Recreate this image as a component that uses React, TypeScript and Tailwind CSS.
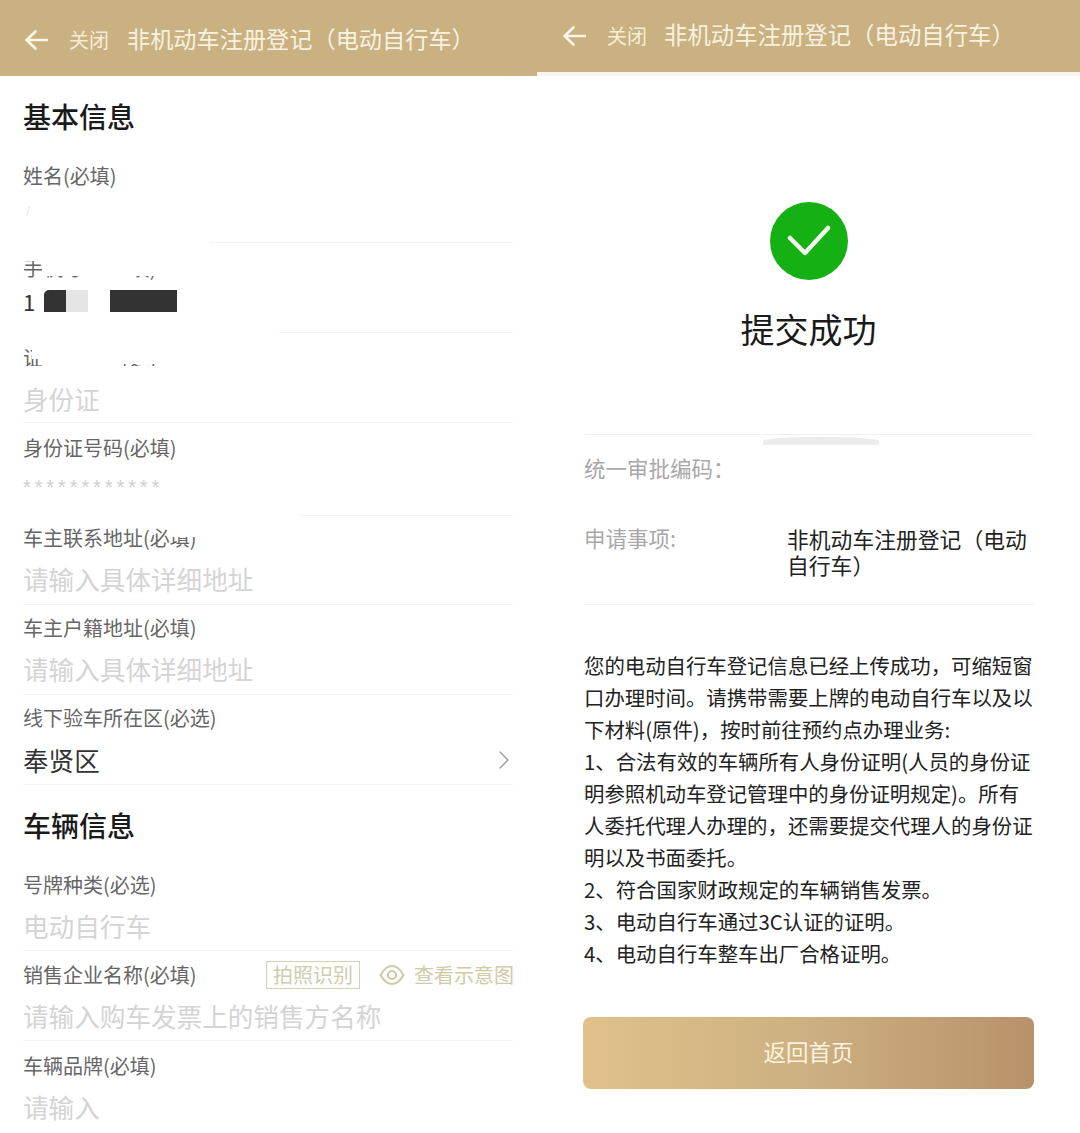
import type { ReactNode } from "react";

type FieldProps = {
	label: string;
	labelCover?: ReactNode;
	labelRight?: ReactNode;
	children?: ReactNode;
	// per row spacing, the rows in the picture are not quite even
	spacing: string;
	gap: string;
	bottom: string;
	dividerClass?: string;
};

const Field = ({
	label,
	labelCover,
	labelRight,
	children,
	spacing,
	gap,
	bottom,
	dividerClass = "",
}: FieldProps) => (
	<div className={spacing}>
		<div className="flex justify-between items-center h-[28px]">
			<div className="relative text-[20px] leading-[28px] text-[#666666]">
				{label}
				{labelCover}
			</div>
			{labelRight}
		</div>
		<div className={gap}>{children}</div>
		<div className={bottom}>
			<div className={`h-px bg-[#f3f3f3] ${dividerClass}`}></div>
		</div>
	</div>
);

const Placeholder = ({ text }: { text: string }) => (
	<div className="text-[25.6px] leading-[28px] h-[28px] text-[#d4d4d4] whitespace-nowrap">
		{text}
	</div>
);

const Header = ({
	outer,
	close,
	title,
}: {
	outer: string;
	close: string;
	title: string;
}) => (
	<div className={`flex items-center bg-[#c9b181] ${outer}`}>
		<svg width="23" height="20" viewBox="0 0 23 20" fill="none">
			<path
				d="M1.5 10H22M10.5 1.5L1.5 10L10.5 18.5"
				stroke="#fbf6e8"
				strokeWidth="2.6"
				strokeLinecap="round"
				strokeLinejoin="round"
			/>
		</svg>
		<span className={`text-[20px] text-[#f5ecd8] ${close}`}>关闭</span>
		<span className={`mb-[3px] text-[#f8f1e0] whitespace-nowrap ${title}`}>
			非机动车注册登记（电动自行车）
		</span>
	</div>
);

const MaterialLines = [
	"您的电动自行车登记信息已经上传成功，可缩短窗",
	"口办理时间。请携带需要上牌的电动自行车以及以",
	"下材料(原件)，按时前往预约点办理业务:",
	"1、合法有效的车辆所有人身份证明(人员的身份证",
	"明参照机动车登记管理中的身份证明规定)。所有",
	"人委托代理人办理的，还需要提交代理人的身份证",
	"明以及书面委托。",
	"2、符合国家财政规定的车辆销售发票。",
	"3、电动自行车通过3C认证的证明。",
	"4、电动自行车整车出厂合格证明。",
];

export default function App() {
	return (
		<div className="flex w-[1080px] h-[1133px] overflow-hidden bg-white [font-family:'Noto_Sans_CJK_SC','Liberation_Sans',sans-serif]">
			{/* Left: form */}
			<div className="w-[537px] shrink-0">
				<Header
					outer="h-[76px] pl-[25px] pt-1"
					close="ml-[21px]"
					title="ml-[18px] text-[23.2px]"
				/>
				<div className="pl-[23px] pr-6">
					<h2 className="mt-[20px] text-[28px] leading-[40px] font-medium text-[#1a1a1a]">
						基本信息
					</h2>

					{/* Basic info */}
					<div className="mt-[15px]">
						<Field
							label="姓名(必填)"
							spacing="pt-[11px]"
							gap="h-[52px] pt-[14px] pl-[3px] text-[10px] leading-[12px] text-[#dddddd]"
							bottom=""
							dividerClass="ml-[186px]"
						>
							/
						</Field>
						<Field
							label="手机号码(必填)"
							labelCover={
								<>
									<div className="absolute left-0 top-0 w-[20px] h-[7px] bg-white"></div>
									<div className="absolute left-[19px] top-0 w-[114px] h-[22px] bg-white"></div>
									<div className="absolute left-[58px] top-0 w-[52px] h-[28px] bg-white"></div>
								</>
							}
							spacing="pt-[11px]"
							gap="mt-[5px] h-[28px] flex items-center"
							bottom="pt-[17px]"
							dividerClass="ml-[256px]"
						>
							<span className="w-[21px] text-[22px] text-[#333333]">1</span>
							<div className="w-[22px] h-[22px] rounded-tl-[5px] bg-[#333333]"></div>
							<div className="w-[22px] h-[22px] bg-[#e5e5e5]"></div>
							<div className="ml-[22px] w-[67px] h-[22px] bg-[#333333]"></div>
						</Field>
						<Field
							label="证件类型(必选)"
							labelCover={
								<>
									<div className="absolute left-[19px] top-0 w-[76px] h-[28px] bg-white"></div>
									<div className="absolute left-[95px] top-0 w-[60px] h-[20px] bg-white"></div>
									<div className="absolute left-[9px] top-0 w-[12px] h-[15px] bg-white"></div>
									<div className="absolute left-0 top-[22px] w-[160px] h-[6px] bg-white"></div>
								</>
							}
							spacing="pt-[11px]"
							gap="mt-[13px]"
							bottom="pt-[9px]"
						>
							<Placeholder text="身份证" />
						</Field>
						<Field
							label="身份证号码(必填)"
							spacing="pt-[11px]"
							gap="mt-[11px] h-[28px] text-[20px] leading-[28px] tracking-[3.9px] text-[#d0d0d0] [font-family:'Liberation_Sans',sans-serif]"
							bottom="pt-[14px]"
							dividerClass="ml-[276px]"
						>
							************
						</Field>
						<Field
							label="车主联系地址(必填)"
							labelCover={
								<div className="absolute left-[146px] top-0 w-[30px] h-[13px] bg-white"></div>
							}
							spacing="pt-[8px]"
							gap="mt-[13px]"
							bottom="pt-[11px]"
						>
							<Placeholder text="请输入具体详细地址" />
						</Field>
						<Field
							label="车主户籍地址(必填)"
							spacing="pt-[9px]"
							gap="mt-[13px]"
							bottom="pt-[11px]"
						>
							<Placeholder text="请输入具体详细地址" />
						</Field>
						<Field
							label="线下验车所在区(必选)"
							spacing="pt-[9px]"
							gap="mt-[14px] h-[28px] flex items-center justify-between"
							bottom="pt-[10px]"
						>
							<span className="text-[25.6px] leading-[28px] text-[#333333]">奉贤区</span>
							<svg className="mr-[3px]" width="12" height="20" viewBox="0 0 12 20" fill="none">
								<path
									d="M2 2L10 10L2 18"
									stroke="#a3a3a3"
									strokeWidth="1.6"
									strokeLinecap="round"
									strokeLinejoin="round"
								/>
							</svg>
						</Field>
					</div>

					<h2 className="mt-[20px] mb-[1px] text-[28px] leading-[40px] font-medium text-[#1a1a1a]">
						车辆信息
					</h2>

					{/* Vehicle info */}
					<Field
						label="号牌种类(必选)"
						spacing="pt-[25px]"
						gap="mt-[13px]"
						bottom="pt-[10px]"
					>
						<Placeholder text="电动自行车" />
					</Field>
					<Field
						label="销售企业名称(必填)"
						labelRight={
							<div className="flex items-center -mr-px">
								<span className="w-[94px] h-[28px] flex items-center justify-center border border-[#d3d1b4] text-[20px] leading-[26px] text-[#cfccb0]">
									拍照识别
								</span>
								<svg className="ml-[19px]" width="26" height="22" viewBox="0 0 26 22" fill="none">
									<path
										d="M1.5 11C5 5 9 2 13 2C17 2 21 5 24.5 11C21 17 17 20 13 20C9 20 5 17 1.5 11Z"
										stroke="#d0cba6"
										strokeWidth="2.2"
									/>
									<circle cx="13" cy="11" r="4" stroke="#d0cba6" strokeWidth="2.2" />
								</svg>
								<span className="ml-[9px] text-[20px] leading-[28px] text-[#d0cba6] whitespace-nowrap">
									查看示意图
								</span>
							</div>
						}
						spacing="pt-[10px]"
						gap="mt-[13px]"
						bottom="pt-[10px]"
					>
						<Placeholder text="请输入购车发票上的销售方名称" />
					</Field>
					<Field
						label="车辆品牌(必填)"
						spacing="pt-[11px]"
						gap="mt-[13px]"
						bottom="pt-[10px]"
						dividerClass="hidden"
					>
						<Placeholder text="请输入" />
					</Field>
				</div>
			</div>

			{/* Right: result */}
			<div className="flex-1">
				<div className="border-b-4 border-[#f8f5ef]">
					<Header
						outer="h-[72px] pl-[26px]"
						close="ml-[21px]"
						title="ml-[17px] text-[23.4px]"
					/>
				</div>
				<div className="pl-[48px] pr-[48px]">
					<div className="mt-[126px] ml-[185px] w-[78px] h-[78px] rounded-full bg-[#14b014] flex items-center justify-center">
						<svg width="44" height="32" viewBox="0 0 44 32" fill="none">
							<path
								d="M3 13L18 28L41 3"
								stroke="#f2fbee"
								strokeWidth="4.5"
								strokeLinecap="round"
								strokeLinejoin="round"
							/>
						</svg>
					</div>
					<div className="mt-[29px] -ml-[2px] text-center text-[34px] leading-[40px] text-[#1a1a1a]">
						提交成功
					</div>

					<div className="relative mt-[85px] h-px bg-[#f1f1f1]">
						<div className="absolute left-[178px] top-[3px] w-[116px] h-[8px] rounded-t-[50%] bg-[#ececec]"></div>
					</div>

					<div className="mt-[19px] -ml-px text-[21.5px] leading-[28px] text-[#a8a8a8]">
						统一审批编码：
					</div>

					<div className="mt-[44px] flex">
						<div className="w-[202px] shrink-0 -ml-px mr-px text-[21.5px] leading-[24px] text-[#a8a8a8]">
							申请事项:
						</div>
						<div className="text-[21.8px] leading-[26px] text-[#222222] whitespace-nowrap">
							非机动车注册登记（电动
							<br />
							自行车）
						</div>
					</div>

					<div className="mt-[26px] h-px bg-[#f1f1f1]"></div>

					<div className="mt-[44px] -ml-px text-[20.4px] leading-[32px] text-[#222222] whitespace-nowrap">
						{MaterialLines.map((line) => (
							<div key={line}>{line}</div>
						))}
					</div>

					<button className="mt-[48px] w-[451px] -ml-[2px] h-[72px] pb-[3px] rounded-lg bg-gradient-to-r from-[#e0c18c] via-[#cdb081] to-[#b8926a] text-[22.5px] text-[#fbf3e0]">
						返回首页
					</button>
				</div>
			</div>
		</div>
	);
}
